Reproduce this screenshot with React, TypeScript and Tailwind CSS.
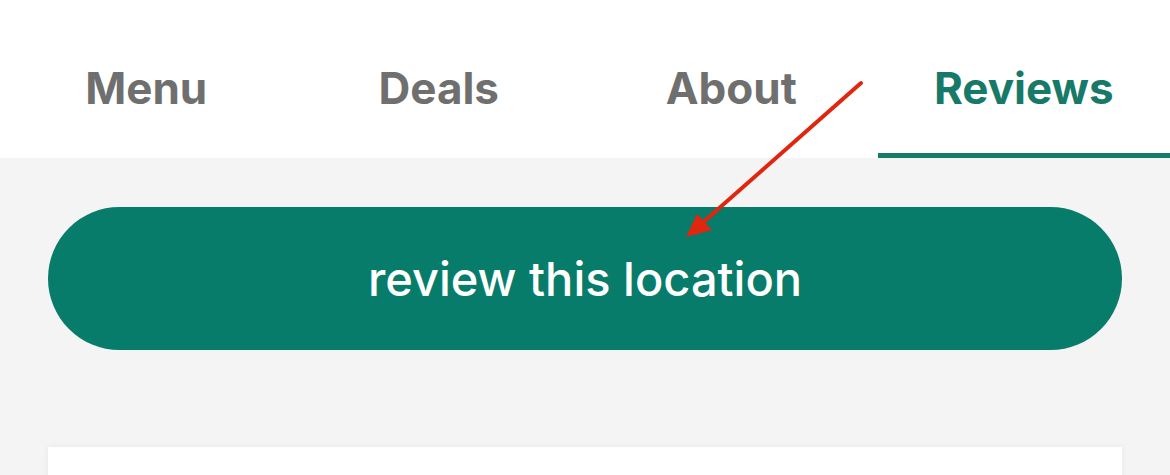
const tabs = ['Menu', 'Deals', 'About', 'Reviews'];

export default function App() {
  const active = 'Reviews';

  return (
    <div className="relative h-[475px] w-[1170px] overflow-hidden bg-[#f4f4f4] font-['Inter',sans-serif]">
      <nav className="grid h-[158px] grid-cols-4 bg-white">
        {tabs.map((tab) => (
          <div
            key={tab}
            className={
              tab === active
                ? 'flex items-center justify-center border-b-[5px] border-[#177a68] pt-[22px] text-[44px] font-bold text-[#177a68]'
                : 'flex items-center justify-center border-b-[5px] border-transparent pt-[22px] text-[44px] font-bold text-[#6f6f6f]'
            }
          >
            {tab}
          </div>
        ))}
      </nav>

      <main className="flex flex-col gap-[97px] px-12 pt-[49px]">
        <button className="flex h-[143px] w-full items-center justify-center rounded-full bg-[#077c6a] pt-[2px] text-[47px] font-medium text-white">
          review this location
        </button>
        <div className="h-[60px] w-full bg-white shadow-[0_0_6px_rgba(0,0,0,0.06)]" />
      </main>

      {/* annotation arrow */}
      <svg className="pointer-events-none absolute left-0 top-0" width="1170" height="475">
        <line x1="861" y1="83" x2="700" y2="225" stroke="#e0260e" strokeWidth="4" strokeLinecap="round" />
        <polygon points="686,237 697,214 712,230" fill="#e0260e" />
      </svg>
    </div>
  );
}
